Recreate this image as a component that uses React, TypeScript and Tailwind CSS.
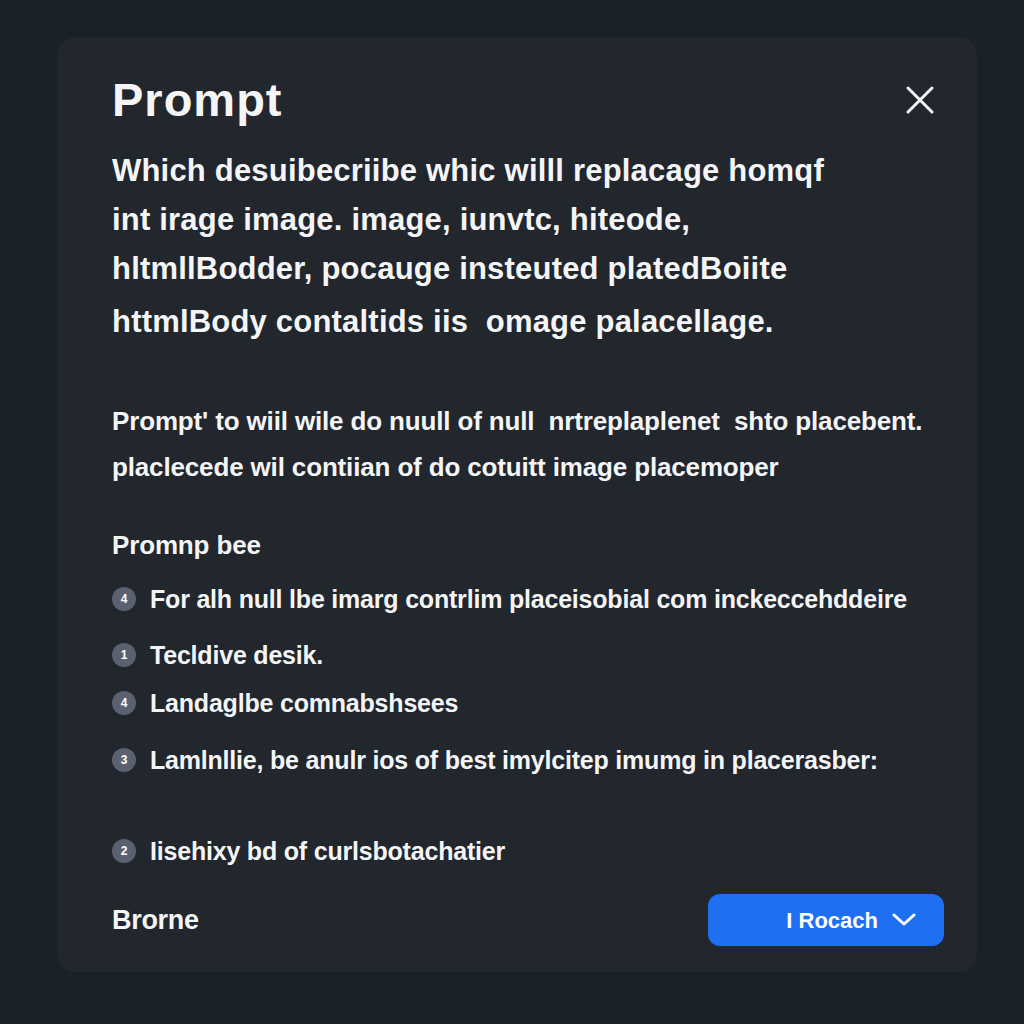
import React from "react";

const font = { fontFamily: '"Liberation Sans", Arial, sans-serif' };

function Num({ n }: { n: string }) {
  return (
    <span className="flex h-[24px] w-[24px] shrink-0 items-center justify-center rounded-full bg-[#5b6170] text-[12px] font-bold text-white">
      {n}
    </span>
  );
}

export default function App() {
  const items: [string, string, string][] = [
    ["4", "For alh null lbe imarg contrlim placeisobial com inckeccehddeire", "mt-0"],
    ["1", "Tecldive desik.", "mt-[24px]"],
    ["4", "Landaglbe comnabshsees", "mt-[16px]"],
    ["3", "Lamlnllie, be anulr ios of best imylcitep imumg in placerasber:", "mt-[25px]"],
    ["2", "Iisehixy bd of curlsbotachatier", "mt-[59px]"],
  ];
  return (
    <div className="flex h-[1024px] w-[1024px] items-start justify-start bg-[#1b2128] pl-[57px] pt-[37px]" style={font}>
      <div className="flex h-[935px] w-[920px] flex-col rounded-[18px] bg-[#22262d] px-[55px] pt-[37px] text-[#f4f5f7]">
        <div className="flex items-center justify-between">
          <h1 className="text-[47px] font-bold leading-[52px] tracking-[1px]">Prompt</h1>
          <svg width="30" height="30" viewBox="0 0 30 30" className="mr-[-13px]">
            <path d="M3 3 L27 27 M27 3 L3 27" stroke="#f4f5f7" strokeWidth="3" strokeLinecap="round" />
          </svg>
        </div>
        <div className="mt-[20px] whitespace-nowrap text-[31px] font-bold leading-[49px] tracking-[0.2px]">
          <p>Which desuibecriibe whic willl replacage homqf</p>
          <p>int irage image. image, iunvtc, hiteode,</p>
          <p>hltmllBodder, pocauge insteuted platedBoiite</p>
          <p className="mt-[4px]">httmlBody contaltids iis &nbsp;omage palacellage.</p>
        </div>
        <div className="mt-[52px] whitespace-nowrap text-[26px] font-bold leading-[46px] tracking-[-0.15px]">
          <p>Prompt' to wiil wile do nuull of null &nbsp;nrtreplaplenet &nbsp;shto placebent.</p>
          <p>placlecede wil contiian of do cotuitt image placemoper</p>
        </div>
        <p className="mt-[32px] text-[26px] font-bold leading-[46px] tracking-[-0.15px]">Promnp bee</p>
        <div className="mt-[15px] flex flex-col whitespace-nowrap text-[25px] font-bold tracking-[-0.2px]">
          {items.map(([n, t, m], i) => (
            <div key={i} className={`flex items-center gap-[14px] leading-[32px] ${m}`}>
              <Num n={n} />
              <span>{t}</span>
            </div>
          ))}
        </div>
        <div className="mt-[27px] flex items-center justify-between">
          <span className="text-[27px] font-bold tracking-[-0.3px]">Brorne</span>
          <button className="mr-[-22px] flex h-[52px] w-[236px] items-center justify-end gap-[14px] rounded-[12px] bg-[#1f6ff2] pr-[28px] text-[22px] font-bold text-white">
            <span>I Rocach</span>
            <svg width="24" height="14" viewBox="0 0 24 14">
              <path d="M2 2 L12 11 L22 2" stroke="#fff" strokeWidth="3" fill="none" strokeLinecap="round" strokeLinejoin="round" />
            </svg>
          </button>
        </div>
      </div>
    </div>
  );
}
